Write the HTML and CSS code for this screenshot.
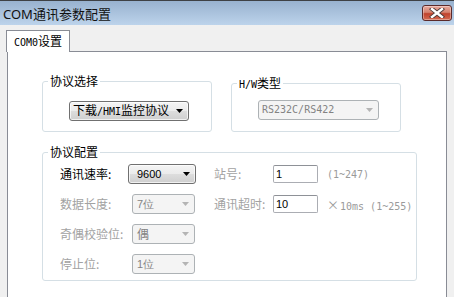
FILE: index.html
```html
<!DOCTYPE html>
<html>
<head>
<meta charset="utf-8">
<link rel="stylesheet" href="styles.css">
</head>
<body>
<div class="win">
  <div class="titlebar">
    <span class="title">COM通讯参数配置</span>
    <div class="close">
      <svg width="16" height="10" viewBox="0 0 16 10">
        <path d="M3 1 L13 9 M13 1 L3 9" stroke="#4a3a3a" stroke-width="4.2" stroke-linecap="square"/>
        <path d="M3 1 L13 9 M13 1 L3 9" stroke="#ffffff" stroke-width="2.4" stroke-linecap="square"/>
      </svg>
    </div>
  </div>
  <div class="body">
    <div class="tabs">
      <div class="tab"><span class="mono">COM0</span>设置</div>
    </div>
    <div class="panel">
      <div class="row1">
        <div class="group g1">
          <span class="legend">协议选择</span>
          <div class="select en w120">
            <span class="val cjk">下载<span class="mono">/HMI</span>监控协议</span>
            <svg class="arr" width="7" height="4" viewBox="0 0 7 4"><path d="M0 0H7L3.5 4Z" fill="#000"/></svg>
          </div>
        </div>
        <div class="group g2">
          <span class="legend"><span class="mono">H/W</span>类型</span>
          <div class="select dis w121">
            <span class="val mono">RS232C/RS422</span>
            <svg class="arr" width="7" height="4" viewBox="0 0 7 4"><path d="M0 0H7L3.5 4Z" fill="#b4b4b4"/></svg>
          </div>
        </div>
      </div>
      <div class="group g3">
        <span class="legend">协议配置</span>
        <div class="form">
          <span class="lbl">通讯速率:</span>
          <div class="cell"><div class="select en w68">
            <span class="val num">9600</span>
            <svg class="arr" width="7" height="4" viewBox="0 0 7 4"><path d="M0 0H7L3.5 4Z" fill="#000"/></svg>
          </div></div>
          <span class="lbl off">站号:</span>
          <div class="cell"><div class="input">1</div></div>
          <span class="hint mono">(1~247)</span>

          <span class="lbl off">数据长度:</span>
          <div class="cell"><div class="select dis w63">
            <span class="val num">7位</span>
            <svg class="arr" width="7" height="4" viewBox="0 0 7 4"><path d="M0 0H7L3.5 4Z" fill="#b4b4b4"/></svg>
          </div></div>
          <span class="lbl off">通讯超时:</span>
          <div class="cell"><div class="input">10</div></div>
          <span class="hint mono"><span class="times">×</span>10ms (1~255)</span>

          <span class="lbl off">奇偶校验位:</span>
          <div class="cell"><div class="select dis w63">
            <span class="val cjk">偶</span>
            <svg class="arr" width="7" height="4" viewBox="0 0 7 4"><path d="M0 0H7L3.5 4Z" fill="#b4b4b4"/></svg>
          </div></div>
          <span></span><span></span><span></span>

          <span class="lbl off">停止位:</span>
          <div class="cell"><div class="select dis w63">
            <span class="val num">1位</span>
            <svg class="arr" width="7" height="4" viewBox="0 0 7 4"><path d="M0 0H7L3.5 4Z" fill="#b4b4b4"/></svg>
          </div></div>
          <span></span><span></span><span></span>
        </div>
      </div>
    </div>
  </div>
</div>
</body>
</html>
```
FILE: styles.css
```css
* { box-sizing: border-box; }
html, body { margin: 0; padding: 0; }
body {
  width: 454px;
  height: 297px;
  overflow: hidden;
  font-family: "Noto Sans CJK SC", "Noto Sans", sans-serif;
  font-size: 12px;
  color: #000;
  background: #f0f0f0;
}
.win {
  width: 454px;
  height: 297px;
  display: flex;
  flex-direction: column;
}
.titlebar {
  height: 25px;
  flex: none;
  border-top: 1px solid #3e4145;
  background: linear-gradient(#98b2cf, #bcd3eb);
  display: flex;
  align-items: flex-start;
  padding: 4px 2px 0 3px;
}
.title {
  font-family: "Noto Sans", "Noto Sans CJK SC", sans-serif;
  font-size: 13px;
  line-height: 18px;
  color: #111;
}
.close {
  margin-left: auto;
  width: 30px;
  height: 16px;
  border: 1px solid #5b2a2a;
  border-radius: 3px;
  background: linear-gradient(#e8aa9e 0%, #d5826f 45%, #c0422c 55%, #d46a52 100%);
  box-shadow: inset 0 0 0 1px rgba(255,255,255,0.35);
  display: flex;
  align-items: center;
  justify-content: center;
}
.body {
  flex: 1;
  display: flex;
  flex-direction: column;
  padding: 5px 7px 0 7px;
  min-height: 0;
}
.tabs {
  display: flex;
  flex: none;
}
.tab {
  position: relative;
  z-index: 1;
  margin-left: -1px;
  margin-bottom: -1px;
  width: 64px;
  height: 22px;
  border: 1px solid #898c95;
  border-bottom: none;
  background: #fff;
  padding-left: 7px;
  line-height: 20px;
  font-size: 12px;
}
.mono {
  font-family: "DejaVu Sans Mono", monospace;
  font-size: 10px;
}
.times { font-family: "Noto Sans CJK SC", sans-serif; font-size: 12px; margin-right: 1px; }
.panel {
  flex: 1;
  background: #fff;
  border: 1px solid #898c95;
  border-bottom: none;
  padding: 29px 0 0 34px;
}
.row1 {
  display: flex;
  align-items: flex-start;
  gap: 19px;
}
.group {
  position: relative;
  border: 1px solid #d5dfe5;
  border-radius: 3px;
}
.legend {
  position: absolute;
  top: -9px;
  left: 5px;
  padding: 0 2px;
  background: #fff;
  line-height: 16px;
  font-size: 12px;
}
.g1 {
  width: 170px;
  height: 51px;
  padding: 19px 0 0 26px;
}
.g2 {
  width: 170px;
  height: 49px;
  margin-top: 2px;
  padding: 16px 0 0 26px;
}
.g3 {
  width: 375px;
  height: 129px;
  margin-top: 20px;
  padding: 11px 0 0 17px;
}
.select {
  height: 20px;
  display: flex;
  align-items: center;
  border-radius: 3px;
  padding: 0 5px 0 3px;
}
.select .val { flex: 1; white-space: nowrap; line-height: 18px; }
.select .arr { flex: none; }
.select.en {
  border: 1px solid #707070;
  background: linear-gradient(#f4f4f4, #ebebeb 50%, #dddddd 51%, #cfcfcf);
  box-shadow: inset 0 0 0 1px rgba(255,255,255,0.7);
}
.select.dis {
  border: 1px solid #adb2b5;
  background: #f4f4f4;
  color: #838383;
}
.w120 { width: 120px; }
.w121 { width: 121px; }
.w68 { width: 68px; padding-left: 8px; }
.w63 { width: 63px; margin-left: 4px; padding-left: 4px; }
.num {
  font-family: "Liberation Sans", sans-serif;
  font-size: 11px;
}
.cjk { font-size: 12px; }
.form {
  display: grid;
  grid-template-columns: 68px 86px 59px 54px auto;
  grid-auto-rows: 20px;
  row-gap: 10px;
  align-items: center;
}
.lbl { white-space: nowrap; line-height: 20px; }
.lbl.off { color: #a2a2a2; }
.cell { display: flex; align-items: center; height: 20px; }
.input {
  width: 45px;
  height: 18px;
  border: 1px solid #abadb3;
  border-top-color: #8e9197;
  border-radius: 2px;
  background: #fff;
  padding-left: 2px;
  font-family: "Liberation Sans", sans-serif;
  font-size: 11px;
  line-height: 16px;
}
.hint {
  color: #9a9a9a;
  white-space: nowrap;
}
```
